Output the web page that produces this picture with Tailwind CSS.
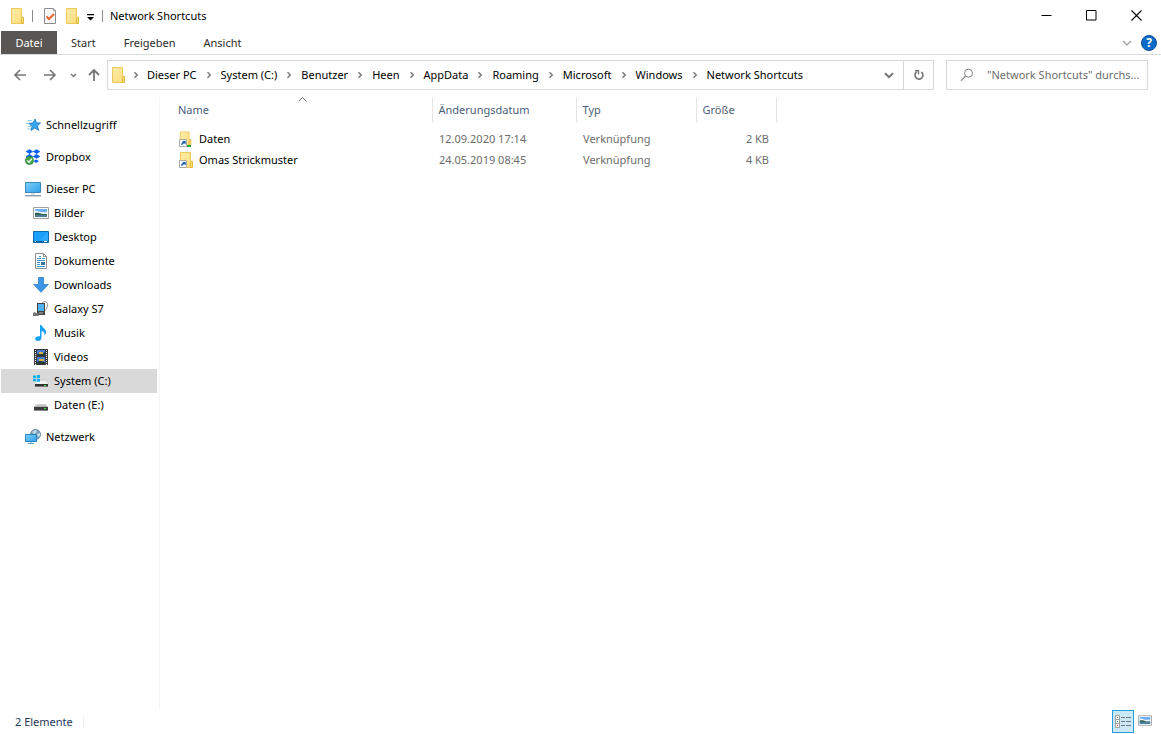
<!DOCTYPE html>
<html lang="de">
<head>
<meta charset="utf-8">
<title>Network Shortcuts</title>
<script src="https://cdn.jsdelivr.net/npm/@tailwindcss/browser@4"></script>
</head>
<body class="flex h-screen flex-col overflow-hidden bg-white font-['Noto_Sans','Open_Sans',sans-serif] text-[11px] leading-4 text-black">

<svg class="absolute size-0" aria-hidden="true">
  <defs>
    <linearGradient id="gFolder" x1="0" y1="0" x2="1" y2="1"><stop offset="0" stop-color="#ffedaa"/><stop offset="1" stop-color="#fcdc79"/></linearGradient>
    <linearGradient id="gScreen" x1="0" y1="0" x2="1" y2="1"><stop offset="0" stop-color="#7fd0fb"/><stop offset="1" stop-color="#2d9fe8"/></linearGradient>
    <linearGradient id="gDrive" x1="0" y1="0" x2="0" y2="1"><stop offset="0" stop-color="#dcdcdc"/><stop offset="1" stop-color="#a9a9a9"/></linearGradient>
    <symbol id="folder" viewBox="0 0 16 16">
      <path d="M1.500.5h10v9h1v6h-11z" fill="url(#gFolder)" stroke="#edc85a"/>
      <path d="M11.500 15.500v-5l.5-1.200h1.500v6.200z" fill="#fbdc78" stroke="#e2b93f"/>
    </symbol>
    <symbol id="shortcut" viewBox="0 0 16 16">
      <path d="M.5 8.500h7v7h-7z" fill="#fff" stroke="#a9a9a9"/>
      <path d="M2.200 14c0-2 .8-3 2-3.100L3 9.900h3.700v3.700l-1-1c-1.200 0-2 .4-2.400 1.400z" fill="#1e5fae"/>
    </symbol>
    <symbol id="picture" viewBox="0 2 16 12">
      <path d="M.5 2.500h15v11H.5z" fill="#fff" stroke="#a0a0a0"/>
      <path d="M2 4h12v8H2z" fill="#6eaef0"/><path d="M2 6c3-1 4 1 6 1s3 .5 6 0v2H2z" fill="#e6f3fb"/>
      <path d="M2 8c3-.8 5 .2 7 1h5v1H2z" fill="#33604e"/><path d="M2 10h12v2H2z" fill="#4b7d99"/>
    </symbol>
    <symbol id="drive" viewBox="0 0 16 16">
      <path d="M3.500 7h9l2.500 3H1z" fill="url(#gDrive)"/><path d="M1 10h14v4H1z" fill="#3d3d3d"/><path d="M1 13h14v1H1z" fill="#8a8a8a"/><path d="M11 11h2v1h-2z" fill="#3be04b"/>
    </symbol>
    <symbol id="chev" viewBox="0 0 6 8"><path d="M1.500 1.200 4.300 4 1.500 6.800" fill="none" stroke="#757575" stroke-width="1.400"/></symbol>
  </defs>
</svg>

<header>
  <div class="flex h-[31px] items-center">
    <button class="ml-[10px]" aria-label="Systemmenü"><svg class="size-4"><use href="#folder"/></svg></button>
    <span class="ml-[6px] h-3 w-px bg-[#8a8a8a]"></span>
    <button class="ml-[10px]" aria-label="Eigenschaften"><svg class="size-4" viewBox="0 0 16 16"><path d="M1.500.5h9l2 2v13h-11z" fill="#f8f8f8" stroke="#8c8c8c"/><path d="M10.500.5v2h2" fill="#fff" stroke="#8c8c8c"/><path d="m3.500 8.500 2.500 2.500 5-5" fill="none" stroke="#ec6231" stroke-width="2"/></svg></button>
    <button class="ml-[6px]" aria-label="Neuer Ordner"><svg class="size-4"><use href="#folder"/></svg></button>
    <button class="ml-[5px]" aria-label="Symbolleiste anpassen"><svg class="h-4 w-[9px]" viewBox="0 0 9 16"><path d="M1 6h7v1.200H1zM1 9h7l-3.500 3.500z"/></svg></button>
    <span class="ml-[7px] h-3 w-px bg-[#8a8a8a]"></span>
    <h1 class="ml-[7px] flex-1">Network Shortcuts</h1>
    <div class="mr-[2px] flex h-full">
      <button class="grid w-[46px] place-items-center" aria-label="Minimieren"><svg class="size-[11px]" viewBox="0 0 11 11"><path d="M.5 5h10v1H.5z"/></svg></button>
      <button class="grid w-[45px] place-items-center" aria-label="Maximieren"><svg class="size-[11px]" viewBox="0 0 11 11"><path d="M.5.5h9.500v9.500H.5z" fill="none" stroke="#000"/></svg></button>
      <button class="grid w-[45px] place-items-center" aria-label="Schließen"><svg class="size-[11px]" viewBox="0 0 11 11"><path d="m.5.5 10 10m0-10-10 10" fill="none" stroke="#000" stroke-width="1.100"/></svg></button>
    </div>
  </div>

  <nav class="flex h-6 items-center border-b border-[#dadbdc] pl-px text-[#2b2b2b]" aria-label="Menüband">
    <button class="h-[23px] w-14 bg-[#595653] text-white">Datei</button>
    <button class="ml-[14px]">Start</button>
    <button class="ml-[28px]">Freigeben</button>
    <button class="ml-[28px]">Ansicht</button>
    <span class="flex-1"></span>
    <button class="mr-[9px]" aria-label="Menüband erweitern"><svg class="h-[6px] w-[10px]" viewBox="0 0 10 6"><path d="m1 1 4 4 4-4" fill="none" stroke="#9a9a9a" stroke-width="1.200"/></svg></button>
    <button class="mr-1 size-4 rounded-full border border-[#0a4f9e] bg-[#0a6bc8] text-[12px] leading-[14px] font-bold text-white" aria-label="Hilfe">?</button>
  </nav>

  <div class="mt-[5px] mr-[13px] flex h-[30px] items-center">
    <div class="flex w-[107px] shrink-0 items-center pl-[13px]">
      <button aria-label="Zurück"><svg class="size-[14px]" viewBox="0 0 14 14"><path d="M13 7H2m5-5L2 7l5 5" fill="none" stroke="#757575" stroke-width="1.600"/></svg></button>
      <button class="ml-4" aria-label="Vorwärts"><svg class="size-[14px]" viewBox="0 0 14 14"><path d="M1 7h11M7 2l5 5-5 5" fill="none" stroke="#757575" stroke-width="1.600"/></svg></button>
      <button class="ml-[13px]" aria-label="Zuletzt besucht"><svg class="h-[5px] w-[7px]" viewBox="0 0 7 5"><path d="m1 1 2.500 2.500L6 1" fill="none" stroke="#757575" stroke-width="1.400"/></svg></button>
      <button class="ml-[10px]" aria-label="Nach oben"><svg class="size-[14px]" viewBox="0 0 14 14"><path d="M7 13V2M2 7l5-5 5 5" fill="none" stroke="#757575" stroke-width="1.800"/></svg></button>
    </div>
    <div class="flex h-full min-w-0 flex-1 items-center border border-[#d9d9d9]">
      <svg class="ml-[3px] size-4 shrink-0"><use href="#folder"/></svg>
      <svg class="mx-[6px] h-2 w-[6px] shrink-0"><use href="#chev"/></svg>
      <ol class="ml-[2px] flex min-w-0 flex-1 items-center gap-[9px] whitespace-nowrap">
        <li class="flex items-center gap-[9px]"><button>Dieser PC</button><svg class="h-2 w-[6px]"><use href="#chev"/></svg></li>
        <li class="flex items-center gap-[9px]"><button>System (C:)</button><svg class="h-2 w-[6px]"><use href="#chev"/></svg></li>
        <li class="flex items-center gap-[9px]"><button>Benutzer</button><svg class="h-2 w-[6px]"><use href="#chev"/></svg></li>
        <li class="flex items-center gap-[9px]"><button>Heen</button><svg class="h-2 w-[6px]"><use href="#chev"/></svg></li>
        <li class="flex items-center gap-[9px]"><button>AppData</button><svg class="h-2 w-[6px]"><use href="#chev"/></svg></li>
        <li class="flex items-center gap-[9px]"><button>Roaming</button><svg class="h-2 w-[6px]"><use href="#chev"/></svg></li>
        <li class="flex items-center gap-[9px]"><button>Microsoft</button><svg class="h-2 w-[6px]"><use href="#chev"/></svg></li>
        <li class="flex items-center gap-[9px]"><button>Windows</button><svg class="h-2 w-[6px]"><use href="#chev"/></svg></li>
        <li><button>Network Shortcuts</button></li>
      </ol>
      <button class="mr-[9px]" aria-label="Vorherige Orte"><svg class="h-[7px] w-[10px]" viewBox="0 0 10 7"><path d="m1 1.200 4 4 4-4" fill="none" stroke="#757575" stroke-width="2"/></svg></button>
      <button class="grid h-full w-[30px] place-items-center border-l border-[#d9d9d9]" aria-label="Aktualisieren"><svg class="size-3" viewBox="0 0 12 12"><path d="M8.200 2.800a4 4 0 1 1-4.700.2" fill="none" stroke="#757575" stroke-width="1.600"/><path d="M2 1h4.200v4.200H4.800V2.500H2z" fill="#757575"/></svg></button>
    </div>
    <label class="ml-3 flex h-full w-[202px] shrink-0 items-center border border-[#d9d9d9] pl-[13px]">
      <svg class="size-[14px] shrink-0" viewBox="0 0 14 14"><circle cx="8.500" cy="5.200" r="4" fill="none" stroke="#858585"/><path d="M5.700 8 1 12.700" stroke="#858585" stroke-width="1.200"/></svg>
      <input class="ml-[13px] w-full min-w-0 text-ellipsis outline-none placeholder:text-[#6d6d6d]" type="text" aria-label="Suchen" placeholder="&quot;Network Shortcuts&quot; durchs...">
    </label>
  </div>
</header>

<div class="mt-[7px] flex min-h-0 flex-1">
  <nav class="w-40 shrink-0 border-r border-[#f5f5f5] pt-4 pr-[2px] pl-px" aria-label="Navigationsbereich">
    <ul class="flex flex-col gap-2">
      <li><button class="flex h-6 w-full items-center gap-[5px] pl-6">
        <svg class="size-4" viewBox="0 0 16 16"><path d="m10 2 1.500 3.800 4 .2-3.100 2.800 1.400 4.700-4-2.500L6 13.500l1-4L4 6.300 8 6z" fill="#35a7ee" stroke="#1673bd" stroke-width=".8"/><path d="M3 3.500h4M1 6.500h3M3 9.500h3M2 12h4" stroke="#8dcdf4"/></svg>Schnellzugriff</button></li>
      <li><button class="flex h-6 w-full items-center gap-[5px] pl-6">
        <svg class="size-4" viewBox="0 0 16 16"><path d="m4.500.3 3.700 2.300L4.500 5 .6 2.600zm7 0 3.900 2.300L11.500 5 7.800 2.600zm-7 4.700 3.700 2.400-3.700 2.400L.6 7.400zm7 0 3.900 2.400-3.900 2.400-3.700-2.400zM11 10.400l3 1.500-3 2-2.500-2z" fill="#0b62f2"/><circle cx="4.500" cy="11.500" r="4" fill="#42a947" stroke="#23822d" stroke-width=".8"/><path d="m2.300 11.500 1.700 1.700 3-3.500" fill="none" stroke="#fff" stroke-width="1.300"/></svg>Dropbox</button></li>
      <li>
        <button class="flex h-6 w-full items-center gap-[5px] pl-6">
        <svg class="size-4" viewBox="0 0 16 16"><path d="M.5 1.500h15v10H.5z" fill="url(#gScreen)" stroke="#3a87b9"/><path d="M6 12h4v2H6z" fill="#d6e2ea"/><path d="M0 14h16v1.500H0z" fill="#91a1ad"/></svg>Dieser PC</button>
        <ul>
          <li><button class="flex h-6 w-full items-center gap-[5px] pl-8"><svg class="size-4"><use href="#picture"/></svg>Bilder</button></li>
          <li><button class="flex h-6 w-full items-center gap-[5px] pl-8"><svg class="size-4" viewBox="0 0 16 16"><path d="M.5 2.500h15v11H.5z" fill="#1aa0fc" stroke="#1169ac"/><path d="M15 3v9L6 12z" fill="#36adff" opacity=".6"/><path d="M1 12h14v1H1z" fill="#0e62a5"/><path d="M2 12h1v1H2zm9 0h3v1h-3z" fill="#fff"/></svg>Desktop</button></li>
          <li><button class="flex h-6 w-full items-center gap-[5px] pl-8"><svg class="size-4" viewBox="0 0 16 16"><path d="M2.500.5h8l3 3v12h-11z" fill="#fff" stroke="#8f8f8f"/><path d="M10.500.5v3h3" fill="none" stroke="#8f8f8f"/><path d="M4 5.500h4M6 3.500h2M9 5.500h3M4 7.500h8M4 9.500h3M4 11.500h3M4 13.500h8" stroke="#3a97d3"/><path d="M8 9h4v3H8z" fill="#34729b"/></svg>Dokumente</button></li>
          <li><button class="flex h-6 w-full items-center gap-[5px] pl-8"><svg class="size-4" viewBox="0 0 16 16"><path d="M5.500.5h5v7h4.800L8 15.300.7 7.500h4.800z" fill="#3b97e6" stroke="#2d7ecb" stroke-width=".8"/></svg>Downloads</button></li>
          <li><button class="flex h-6 w-full items-center gap-[5px] pl-8"><svg class="size-4" viewBox="0 0 16 16"><path d="M9 3c0-3 5.500-3.500 5.500.5 0 3-1 4-2 6" fill="none" stroke="#8d8d8d"/><path d="M4 2h8v12H4z" fill="#444"/><path d="M5 3h6v7H5z" fill="#4fb2f5"/><path d="m0 12 2-1 1 1h2l1 3H0z" fill="#777"/><path d="M6 11.500h4v1H6z" fill="#bbb"/></svg>Galaxy S7</button></li>
          <li><button class="flex h-6 w-full items-center gap-[5px] pl-8"><svg class="size-4" viewBox="0 0 16 16"><path d="M7 0h1.500c.5 3 4.500 3.500 4.500 7 0 1.500-.5 2.500-1.500 3.500.5-2.500-.8-4-3-4.500v6.500C8.500 15 6.800 16 5 16c-1.600 0-2.800-.8-2.800-2.200 0-1.700 2-3 4.800-2.500z" fill="#14a0f5"/></svg>Musik</button></li>
          <li><button class="flex h-6 w-full items-center gap-[5px] pl-8"><svg class="size-4" viewBox="0 0 16 16"><path d="M1 0h14v16H1z" fill="#3b3b3b"/><path d="M4 1h8v6H4zm0 7h8v7H4z" fill="#4479d4"/><path d="M4 5.500 7 4l2 1 3-2v4H4zM4 13l3-1.500 5 2V15H4z" fill="#263d3b"/><path d="M6 3h4v2H6zm0 7h5v2H6z" fill="#d9b142"/><path d="M2.500 1v15M13.500 1v15" stroke="#fff" stroke-dasharray="1 1"/></svg>Videos</button></li>
          <li><button class="flex h-6 w-full items-center gap-[5px] bg-[#d9d9d9] pl-8" aria-current="true"><svg class="size-4" viewBox="0 0 16 16"><path d="M4.500 8H13l2 3H2z" fill="#f2f2f2"/><path d="M2 11h13v3H2z" fill="#333"/><path d="M2 13h13v1H2z" fill="#777"/><path d="M11 12h2v1h-2z" fill="#3be04b"/><path d="M0 2.500h3V5H0zM3.800 2H7v3H3.800zM0 5.700h3v2.500H0zm3.800 0H7v3H3.800z" fill="#12aff0"/></svg>System (C:)</button></li>
          <li><button class="flex h-6 w-full items-center gap-[5px] pl-8"><svg class="size-4"><use href="#drive"/></svg>Daten (E:)</button></li>
        </ul>
      </li>
      <li><button class="flex h-6 w-full items-center gap-[5px] pl-6">
        <svg class="size-4" viewBox="0 0 16 16"><circle cx="10.500" cy="5.500" r="5" fill="#7d9fb5" stroke="#567e98" stroke-width=".8"/><path d="M7 3c2-2 4-2 5-1l-1 2-2 1zm5 2 3-1v3l-2 1z" fill="#c3dbe8"/><path d="M.5 5.500h11v7H.5z" fill="url(#gScreen)" stroke="#2a84bf"/><path d="M3 14.500h6M6 13v2" stroke="#5ba4d2"/></svg>Netzwerk</button></li>
    </ul>
  </nav>

  <main class="min-w-0 flex-1 pl-[11px]">
    <table class="w-[605px] table-fixed border-collapse text-left text-[#6d6d6d]">
      <colgroup><col class="w-[261px]"><col class="w-36"><col class="w-[120px]"><col class="w-20"></colgroup>
      <thead class="text-[#4c607a]">
        <tr class="h-[26px]">
          <th class="relative border-r border-[#e5e5e5] pl-[7px] font-normal" aria-sort="ascending">Name<svg class="absolute top-0 left-[127px] h-[5px] w-[9px]" viewBox="0 0 9 5"><path d="m.5 4.500 4-4 4 4" fill="none" stroke="#757575"/></svg></th>
          <th class="border-r border-[#e5e5e5] pl-[6px] font-normal">Änderungsdatum</th>
          <th class="border-r border-[#e5e5e5] pl-[6px] font-normal">Typ</th>
          <th class="border-r border-[#e5e5e5] pl-[6px] font-normal">Größe</th>
        </tr>
      </thead>
      <tbody>
        <tr class="h-[5px]"><td colspan="4"></td></tr>
        <tr class="h-[21px]">
          <td class="pl-2 text-black"><a href="#" class="flex items-center gap-1"><svg class="size-4" viewBox="0 0 16 16"><use href="#folder" width="14" height="15"/><use href="#shortcut"/><path d="M8 14h4v2H8z" fill="#21a63a"/></svg>Daten</a></td>
          <td class="pl-[7px]">12.09.2020 17:14</td><td class="pl-[7px]">Verknüpfung</td><td class="pr-[7px] text-right">2 KB</td>
        </tr>
        <tr class="h-[21px]">
          <td class="pl-2 text-black"><a href="#" class="flex items-center gap-1"><svg class="size-4" viewBox="0 0 16 16"><use href="#folder" width="16" height="16"/><use href="#shortcut"/></svg>Omas Strickmuster</a></td>
          <td class="pl-[7px]">24.05.2019 08:45</td><td class="pl-[7px]">Verknüpfung</td><td class="pr-[7px] text-right">4 KB</td>
        </tr>
      </tbody>
    </table>
  </main>
</div>

<footer class="flex h-6 shrink-0 items-center pr-[9px] pl-[15px] text-[#1e395b]">
  <span>2 Elemente</span>
  <span class="ml-[10px] h-3 w-px bg-[#f0f0f0]"></span>
  <span class="flex-1"></span>
  <button class="grid h-[23px] w-[22px] place-items-center self-start border border-[#26a0da] bg-[#cbe8f6]" aria-label="Details"><svg class="h-[14px] w-4" viewBox="0 0 16 14"><path d="M.5.5h4v12h-4zM.5 4.500h4M.5 8.500h4" fill="#fff" stroke="#a0a0a0"/><path d="M2 2h1v1H2z" fill="#666"/><path d="M2 6h1v1H2z" fill="#3b82e0"/><path d="M2 10h1v1H2z" fill="#d02a2a"/><path d="M6 2.500h4m1 0h5M6 6.500h4m1 0h5M6 10.500h4m1 0h5" stroke="#6f7579"/></svg></button>
  <button class="ml-1 self-start pt-[5px]" aria-label="Große Symbole"><svg class="h-[11px] w-[14px]"><use href="#picture"/></svg></button>
</footer>
</body>
</html>
